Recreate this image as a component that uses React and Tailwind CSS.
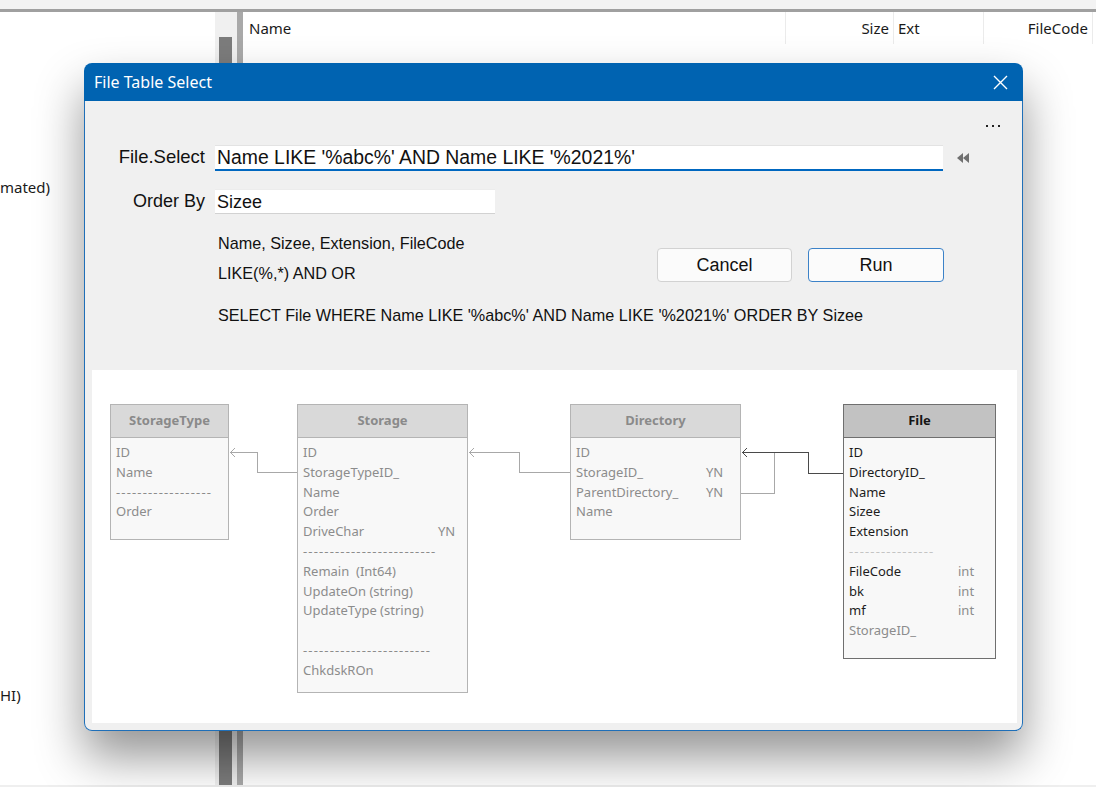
import React from 'react'

const grayRow = 'text-[#8c8c8c]'

const tables = [
  {
    name: 'StorageType', x: 18, y: 34, w: 119, h: 136, pad: 5, col: 0,
    rows: [
      { t: 'ID' }, { t: 'Name' }, { dash: 18 }, { t: 'Order' },
    ],
  },
  {
    name: 'Storage', x: 205, y: 34, w: 171, h: 289, pad: 5, col: 135,
    rows: [
      { t: 'ID' }, { t: 'StorageTypeID_' }, { t: 'Name' }, { t: 'Order' },
      { t: 'DriveChar', r: 'YN' }, { dash: 25 }, { t: 'Remain  (Int64)' },
      { t: 'UpdateOn (string)' }, { t: 'UpdateType (string)' }, { t: '' },
      { dash: 24 }, { t: 'ChkdskROn' },
    ],
  },
  {
    name: 'Directory', x: 478, y: 34, w: 171, h: 136, pad: 5, col: 130,
    rows: [
      { t: 'ID' }, { t: 'StorageID_', r: 'YN' }, { t: 'ParentDirectory_', r: 'YN' }, { t: 'Name' },
    ],
  },
  {
    name: 'File', x: 751, y: 34, w: 153, h: 255, pad: 5, col: 109, active: true,
    rows: [
      { t: 'ID' }, { t: 'DirectoryID_' }, { t: 'Name' }, { t: 'Sizee' }, { t: 'Extension' },
      { dash: 16 }, { t: 'FileCode', r: 'int' }, { t: 'bk', r: 'int' }, { t: 'mf', r: 'int' },
      { t: 'StorageID_', muted: true },
    ],
  },
]

function Table({ tb }) {
  const active = tb.active
  return (
    <div
      className={`absolute flex flex-col border ${active ? 'border-[#6f6f6f]' : 'border-[#b4b4b4]'} bg-[#f8f8f8]`}
      style={{ left: tb.x, top: tb.y, width: tb.w, height: tb.h }}
    >
      <div
        className={`h-[33px] shrink-0 flex items-center justify-center border-b text-[13px] font-bold ${
          active ? 'bg-[#c2c2c2] border-[#6f6f6f] text-[#151515]' : 'bg-[#d9d9d9] border-[#b4b4b4] text-[#8a8a8a]'
        }`}
      >
        {tb.name}
      </div>
      <div className="pt-[5px] text-[13px] leading-[19.8px]" style={{ paddingLeft: tb.pad }}>
        {tb.rows.map((row, i) => {
          if (row.dash) {
            return (
              <div
                key={i}
                className={`h-[19.8px] whitespace-nowrap tracking-[1.15px] ${active ? 'text-[#c4c4c4]' : grayRow}`}
              >
                {'-'.repeat(row.dash)}
              </div>
            )
          }
          const textCls = active ? (row.muted ? 'text-[#8c8c8c]' : 'text-[#1c1c1c]') : grayRow
          return (
            <div key={i} className="flex h-[19.8px] whitespace-pre">
              <div className={textCls} style={{ width: tb.col || undefined }}>{row.t}</div>
              {row.r && <div className={active ? 'text-[#8c8c8c]' : grayRow}>{row.r}</div>}
            </div>
          )
        })}
      </div>
    </div>
  )
}

function Connectors() {
  return (
    <svg className="absolute inset-0 w-full h-full pointer-events-none" shapeRendering="crispEdges">
      <g fill="none" stroke="#a8a8a8" strokeWidth="1">
        <polyline points="205,102.5 165.5,102.5 165.5,82.5 138,82.5" />
        <polyline points="478,102.5 427.5,102.5 427.5,82.5 377,82.5" />
        <polyline points="649,123.5 682.5,123.5 682.5,82.5" />
      </g>
      <g fill="none" stroke="#a8a8a8" strokeWidth="1" shapeRendering="auto">
        <polyline points="143,78 138.5,82.5 143,87" />
        <polyline points="382,78 377.5,82.5 382,87" />
      </g>
      <polyline points="751,103.5 716.5,103.5 716.5,82.5 650,82.5" fill="none" stroke="#4a4a4a" strokeWidth="1.2" />
      <polyline points="655,78 650.5,82.5 655,87" fill="none" stroke="#4a4a4a" strokeWidth="1.2" />
    </svg>
  )
}

export default function App() {
  return (
    <div className="relative w-[1096px] h-[787px] overflow-hidden bg-white font-['Noto_Sans',sans-serif] text-[#1a1a1a]">
      {/* window behind the dialog */}
      <div className="flex flex-col h-full">
        <div className="h-[9px] bg-[#f3f3f3]" />
        <div className="h-[3px] bg-[#a0a0a0]" />
        <div className="flex flex-1">
          <div className="w-[215px] flex flex-col pt-[165px] text-[15px] leading-[20px]">
            <div className="whitespace-nowrap">mated)</div>
            <div className="mt-[488px] whitespace-nowrap">HI)</div>
          </div>
          <div className="w-[22px] bg-[#f0f0f0] pt-[25px] pl-[4px]">
            <div className="w-[13px] h-full bg-[#7c7c7c]" />
          </div>
          <div className="w-[6px] bg-[#a9a9a9]" />
          <div className="flex-1">
            <div className="flex h-[32px] text-[15px] leading-[32px]">
              <div className="w-[543px] pl-[6px] border-r border-[#ebebeb]">Name</div>
              <div className="w-[108px] pr-[4px] text-right border-r border-[#ebebeb]">Size</div>
              <div className="w-[90px] pl-[4px] border-r border-[#ebebeb]">Ext</div>
              <div className="w-[109px] pr-[4px] text-right border-r border-[#ebebeb]">FileCode</div>
            </div>
          </div>
        </div>
        <div className="h-[2px] bg-[#efefef]" />
      </div>

      {/* dialog */}
      <div className="absolute left-[84px] top-[63px] w-[939px] h-[668px] flex flex-col rounded-[8px] shadow-[0_26px_48px_rgba(0,0,0,0.42)]">
        <div className="h-[38px] shrink-0 flex items-center justify-between pl-[10px] pr-[15px] bg-[#0063b1] rounded-t-[8px] text-white text-[16px]">
          <span>File Table Select</span>
          <svg width="15" height="15" viewBox="0 0 15 15">
            <path d="M1 1 L14 14 M14 1 L1 14" stroke="white" strokeWidth="1.4" />
          </svg>
        </div>

        <div className="flex-1 flex flex-col bg-[#f0f0f0] border-x border-b border-[#1f6fb8] rounded-b-[8px] font-['Liberation_Sans',Arial,sans-serif] text-[#111]">
          <div className="h-[44px] flex justify-end items-start pt-[24px] pr-[22px] gap-[4px]">
            <span className="w-[2px] h-[2px] bg-[#222]" />
            <span className="w-[2px] h-[2px] bg-[#222]" />
            <span className="w-[2px] h-[2px] bg-[#222]" />
          </div>

          <div className="flex items-center h-[26px]">
            <div className="w-[120px] text-right text-[18.5px] -mt-[2px]">File.Select</div>
            <div className="ml-[10px] w-[728px] h-[26px] bg-white border-t border-[#e3e3e3] border-b-2 border-b-[#0067c0] pl-[2px] text-[19.4px] leading-[22px]">
              Name LIKE '%abc%' AND Name LIKE '%2021%'
            </div>
            <svg className="ml-[14px]" width="12" height="10" viewBox="0 0 12 10">
              <polygon points="6,0 0,5 6,10" fill="#707070" />
              <polygon points="12,0 6,5 12,10" fill="#707070" />
            </svg>
          </div>

          <div className="flex items-center h-[25px] mt-[18px]">
            <div className="w-[120px] text-right text-[18px]">Order By</div>
            <div className="ml-[10px] w-[280px] h-[25px] bg-white border-t border-[#ececec] border-b border-b-[#d2d2d2] pl-[2px] text-[18px] leading-[24px]">
              Sizee
            </div>
          </div>

          <div className="flex items-start">
            <div className="pl-[133px] mt-[19px] text-[16.2px] leading-[20px]">
              <div>Name, Sizee, Extension, FileCode</div>
              <div className="mt-[10px]">LIKE(%,*) AND OR</div>
            </div>
            <div className="ml-auto mr-[78px] mt-[34px] flex gap-[16px] text-[18px]">
              <button className="w-[135px] h-[34px] rounded-[4px] border border-[#d2d2d2] bg-[#fbfbfb]">Cancel</button>
              <button className="w-[136px] h-[34px] rounded-[4px] border border-[#3c82c8] bg-[#fbfbfb]">Run</button>
            </div>
          </div>

          <div className="pl-[133px] mt-[22px] text-[16.2px] leading-[20px]">
            SELECT File WHERE Name LIKE '%abc%' AND Name LIKE '%2021%' ORDER BY Sizee
          </div>

          <div className="relative flex-1 ml-[7px] mr-[5px] mt-[45px] mb-[7px] bg-white font-['Noto_Sans',sans-serif]">
            <Connectors />
            {tables.map(tb => (
              <Table key={tb.name} tb={tb} />
            ))}
          </div>
        </div>
      </div>
    </div>
  )
}
